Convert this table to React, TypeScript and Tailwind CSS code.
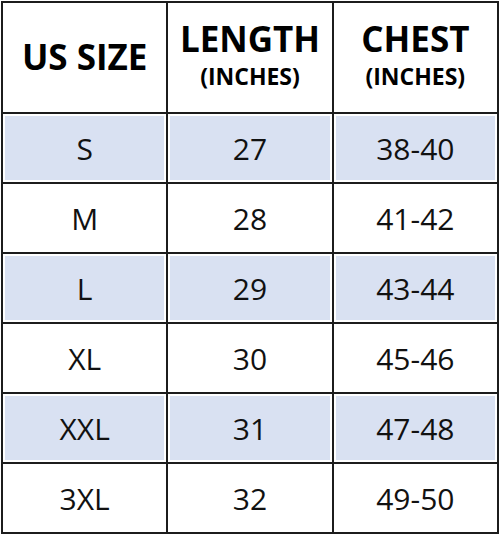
const rows = [
  ["S", "27", "38-40"],
  ["M", "28", "41-42"],
  ["L", "29", "43-44"],
  ["XL", "30", "45-46"],
  ["XXL", "31", "47-48"],
  ["3XL", "32", "49-50"],
]

function Cell({ shaded, children }: { shaded: boolean; children: React.ReactNode }) {
  return (
    <div className="border-r-2 border-b-2 border-[#1c1c1c] p-[2px]">
      <div
        className={`flex h-full items-center justify-center text-[30px] text-[#111] ${
          shaded ? "bg-[#d9e1f2]" : "bg-white"
        }`}
      >
        {children}
      </div>
    </div>
  )
}

export default function App() {
  return (
    <div
      className="h-[534px] w-[500px] bg-white pl-[1px] pt-[1px]"
      style={{ fontFamily: '"Open Sans", "Noto Sans", sans-serif' }}
    >
      <div className="grid w-[498px] grid-cols-3 grid-rows-[111px_repeat(6,70px)] border-l-2 border-t-2 border-[#1c1c1c]">
        <div className="flex items-center justify-center border-r-2 border-b-2 border-[#1c1c1c] text-[35px] font-bold text-black">
          US SIZE
        </div>
        <div className="flex flex-col items-center justify-center border-r-2 border-b-2 border-[#1c1c1c] pb-[6px] text-black">
          <span className="text-[35px] font-bold leading-[42px]">LENGTH</span>
          <span className="text-[23px] font-bold leading-[32px]">(INCHES)</span>
        </div>
        <div className="flex flex-col items-center justify-center border-r-2 border-b-2 border-[#1c1c1c] pb-[6px] text-black">
          <span className="text-[35px] font-bold leading-[42px]">CHEST</span>
          <span className="text-[23px] font-bold leading-[32px]">(INCHES)</span>
        </div>
        {rows.map((r, i) =>
          r.map((v) => (
            <Cell key={r[0] + v} shaded={i % 2 === 0}>
              {v}
            </Cell>
          ))
        )}
      </div>
    </div>
  )
}
